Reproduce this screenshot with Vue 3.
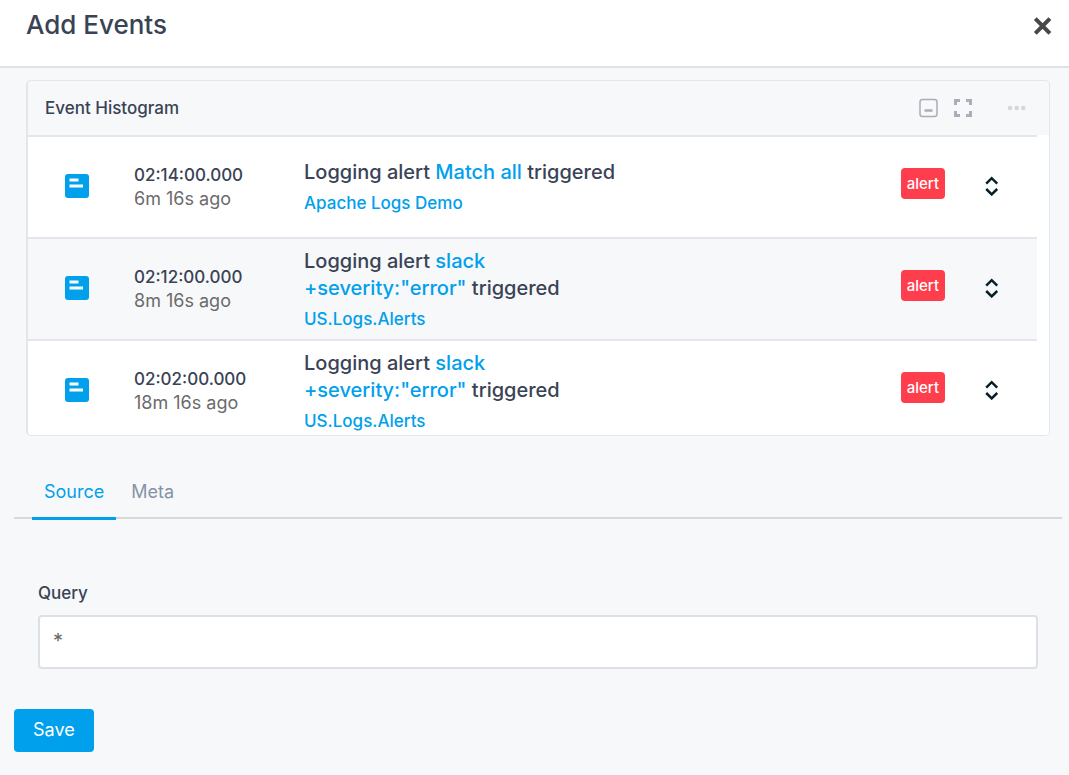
<script setup>
import { ref } from 'vue'

const query = ref('*')
const activeTab = ref('Source')
const tabs = ['Source', 'Meta']
const events = [
  { time: '02:14:00.000', ago: '6m 16s ago', name: 'Match all', app: 'Apache Logs Demo' },
  { time: '02:12:00.000', ago: '8m 16s ago', name: 'slack +severity:"error"', app: 'US.Logs.Alerts' },
  { time: '02:02:00.000', ago: '18m 16s ago', name: 'slack +severity:"error"', app: 'US.Logs.Alerts' },
]
</script>

<template>
  <div class="page">
    <header class="top">
      <h1>Add Events</h1>
      <button class="icon-btn" type="button" aria-label="Close">
        <svg width="20" height="20" viewBox="0 0 20 20" fill="none" stroke="#484848" stroke-width="4">
          <path d="M2.300 2.600L16.900 17.400M16.900 2.600L2.300 17.400" />
        </svg>
      </button>
    </header>

    <section class="card">
      <div class="card-head">
        <h2>Event Histogram</h2>
        <button class="icon-btn" type="button" aria-label="Minimize">
          <svg width="20" height="20" viewBox="0 0 20 20" fill="none">
            <rect x="1" y="1.500" width="17" height="17" rx="2.5" stroke="#a9afb8" stroke-width="1.5" />
            <path d="M5.500 12.500h8" stroke="#a9afb8" stroke-width="2.6" />
          </svg>
        </button>
        <button class="icon-btn" type="button" aria-label="Full screen">
          <svg width="20" height="20" viewBox="0 0 20 20" fill="none" stroke="#a9afb8" stroke-width="3">
            <path d="M2.500 7V2.500H7M13 2.500h4.500V7M17.500 13v4.500H13M7 17.500H2.500V13" />
          </svg>
        </button>
        <button class="icon-btn more" type="button" aria-label="More options">
          <svg width="20" height="20" viewBox="0 0 20 20" fill="#d5d7da">
            <circle cx="3" cy="10" r="2.300" /><circle cx="9.700" cy="10" r="2.300" /><circle cx="16.300" cy="10" r="2.300" />
          </svg>
        </button>
      </div>
      <ul class="events">
        <li v-for="event in events" :key="event.time" class="event">
          <svg class="kind" width="24" height="24" viewBox="0 0 24 24">
            <rect width="24" height="24" rx="3" fill="#00a0ec" />
            <path d="M4.500 6h9M4.500 12h13.500" stroke="#fff" stroke-width="2.800" />
          </svg>
          <div class="when">
            <div class="time">{{ event.time }}</div>
            <div class="ago">{{ event.ago }}</div>
          </div>
          <div class="what">
            <p class="title">Logging alert <a href="#">{{ event.name }}</a> triggered</p>
            <a class="app" href="#">{{ event.app }}</a>
          </div>
          <span class="tag">alert</span>
          <button class="icon-btn" type="button" aria-label="Expand event">
            <svg width="14" height="20" viewBox="0 0 14 20" fill="none" stroke="#04202c" stroke-width="2.500">
              <path d="M1.200 7.600L6.700 2.200l5.500 5.400M1.200 13L6.700 18.400l5.500-5.400" />
            </svg>
          </button>
        </li>
      </ul>
    </section>

    <div class="tabs" role="tablist">
      <button
        v-for="tab in tabs"
        :key="tab"
        type="button"
        role="tab"
        class="tab"
        :class="{ active: tab === activeTab }"
        :aria-selected="tab === activeTab"
        @click="activeTab = tab"
      >{{ tab }}</button>
    </div>

    <form class="form" @submit.prevent>
      <div class="field">
        <label for="query">Query</label>
        <input id="query" v-model="query" type="text" />
      </div>
      <button class="save" type="submit">Save</button>
    </form>
  </div>
</template>

<style>
body {
  background: #f7f8fa;
}
</style>

<style scoped>
.page {
  font-family: Inter, "Liberation Sans", sans-serif;
  font-size: 18px;
  color: #394355;
}
.page * {
  box-sizing: border-box;
}
h1, h2, p, ul {
  margin: 0;
  padding: 0;
}
a {
  color: #00a0ec;
  text-decoration: none;
}
button {
  font-family: inherit;
  font-size: 18px;
  cursor: pointer;
}
.icon-btn {
  display: flex;
  padding: 0;
  border: 0;
  background: none;
}
.top {
  display: flex;
  align-items: flex-start;
  justify-content: space-between;
  padding: 8px 16px 24px 26px;
  background: #fff;
  border-bottom: 2px solid #dfe1ea;
}
.top .icon-btn {
  padding-top: 8px;
}
h1 {
  font-size: 26px;
  line-height: 34px;
  font-weight: 500;
}
.card {
  margin: 12px 19px 0 26px;
  border: 1px solid #e4e6ee;
  border-left-width: 2px;
  border-radius: 5px;
  overflow: hidden;
}
.card-head {
  display: flex;
  align-items: center;
  gap: 14px;
  height: 54px;
  padding: 0 22px 0 17px;
}
h2 {
  flex: 1;
  font-size: 17px;
  line-height: 24px;
  font-weight: 500;
}
.more {
  margin-left: 20px;
}
.events {
  height: 300px;
  padding-right: 12px;
  overflow: hidden;
  list-style: none;
  background: #fff;
}
.event {
  display: flex;
  align-items: center;
  height: 102px;
  padding: 0 38px 2px 37px;
  border-top: 2px solid #e4e6ee;
}
.event:nth-child(even) {
  background: #f7f8fa;
}
.when {
  width: 170px;
  margin-left: 45px;
  line-height: 23px;
}
.time {
  padding-top: 1px;
  font-size: 17px;
  font-weight: 500;
}
.ago {
  color: #6b6b6b;
}
.what {
  flex: 1;
  padding-top: 4px;
  font-weight: 500;
}
.title {
  max-width: 330px;
  font-size: 20px;
  line-height: 27px;
}
.app {
  display: block;
  margin-top: 4px;
  font-size: 17px;
  line-height: 27px;
}
.tag {
  margin: 0 40px 6px 0;
  padding: 0 6px;
  border-radius: 4px;
  background: #ff3e4d;
  color: #fff;
  font-size: 15px;
  font-weight: 500;
  line-height: 31px;
}
.tabs {
  display: flex;
  margin: 32px 7px 0 14px;
  padding: 0 18px;
  gap: 3px;
  border-bottom: 2px solid #d6d8db;
}
.tab {
  height: 52px;
  margin-bottom: -3px;
  padding: 0 12px 3px;
  border: 0;
  border-bottom: 3px solid transparent;
  background: none;
  color: #8593a8;
}
.tab.active {
  border-bottom-color: #00a0ec;
  color: #00a0ec;
}
.form {
  padding: 60px 31px 23px 14px;
}
.field {
  margin-left: 24px;
}
label {
  display: block;
  margin-bottom: 8px;
  font-size: 17px;
  font-weight: 500;
  line-height: 28px;
}
input {
  display: block;
  width: 100%;
  height: 54px;
  padding: 0 13px 2px;
  border: 2px solid #dde0e7;
  border-radius: 4px;
  background: #fff;
  color: #666;
  font-family: inherit;
  font-size: 20px;
}
.save {
  height: 43px;
  margin-top: 40px;
  padding: 0 19px 2px;
  border: 0;
  border-radius: 4px;
  background: #00a0ec;
  color: #fff;
}
</style>
